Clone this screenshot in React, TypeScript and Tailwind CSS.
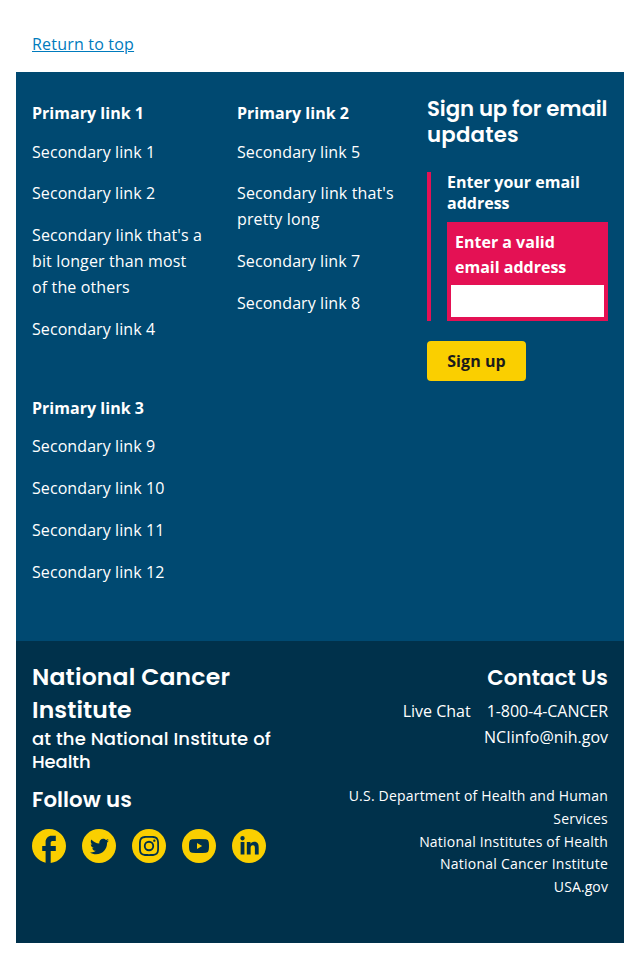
import type { ReactNode } from "react";
import { FaTwitter, FaLinkedinIn } from "react-icons/fa";

const heading = "font-['Poppins','Inter',sans-serif] font-semibold";

type Group = { title: string; links: string[] };

const groups: Group[] = [
  { title: "Primary link 1", links: ["Secondary link 1", "Secondary link 2", "Secondary link that's a bit longer than most of the others", "Secondary link 4"] },
  { title: "Primary link 2", links: ["Secondary link 5", "Secondary link that's pretty long", "Secondary link 7", "Secondary link 8"] },
  { title: "Primary link 3", links: ["Secondary link 9", "Secondary link 10", "Secondary link 11", "Secondary link 12"] },
];

function LinkGroup({ group, className, firstClassName = "" }: { group: Group; className: string; firstClassName?: string }) {
  return (
    <section className={className}>
      <h3 className="font-bold leading-[18px] tracking-[0.03px]">{group.title}</h3>
      <ul className="mt-[17px] flex flex-col gap-4 leading-[25.92px]">
        {group.links.map((link, i) => (
          <li key={link} className={i === 0 ? firstClassName : ""}>
            <a href="#" className={link.includes("that's") ? "tracking-[0.13px]" : "tracking-[0.08px]"}>{link}</a>
          </li>
        ))}
      </ul>
    </section>
  );
}

function Social({ label, children }: { label: string; children: ReactNode }) {
  return (
    <a href="#" aria-label={label} className="flex size-[34px] items-center justify-center rounded-full bg-[#facf00] text-[#00314b]">
      {children}
    </a>
  );
}

export default function App() {
  return (
    <div className="h-[959px] bg-white px-4 font-['Open_Sans',sans-serif] text-base text-white">
      <nav className="h-[72px] px-4 pt-[31px] leading-[26px]">
        <a href="#" className="tracking-[0.2px] text-[#007bbd] underline">Return to top</a>
      </nav>
      <footer>
        <div className="flex h-[569px] bg-[#004971] px-4">
          <div className="flex w-[395px] flex-wrap content-start pt-8">
            <LinkGroup group={groups[0]} className="h-[295px] w-[205px] pr-[34px]" firstClassName="mt-px -mb-px" />
            <LinkGroup group={groups[1]} className="h-[295px] w-[190px] pr-[30px]" firstClassName="mt-px -mb-px" />
            <LinkGroup group={groups[2]} className="w-[205px]" />
          </div>
          <form className="w-[181px] pt-6">
            <h3 className={`${heading} text-[21.3px] leading-[26px]`}>
              <span className="block whitespace-nowrap tracking-[-0.12px]">Sign up for email</span>
              <span className="block tracking-[0.2px]">updates</span>
            </h3>
            <div className="mt-6 h-[149px] border-l-4 border-[#e41154] pl-4">
              <label htmlFor="email" className="block h-[50px] font-bold leading-[20.8px]">Enter your email address</label>
              <div className="h-[99px] bg-[#e41154] px-1 pt-2">
                <p className="h-[55px] px-1 font-bold leading-[25px]">Enter a valid email address</p>
                <input id="email" type="email" className="block h-8 w-full bg-white px-2 text-black outline-none" />
              </div>
            </div>
            <button type="button" className="mt-5 h-10 w-[99px] rounded-[4px] bg-[#facf00] font-bold leading-4 tracking-[0.08px] text-[#1b1b1b]">Sign up</button>
          </form>
        </div>
        <div className="flex h-[302px] justify-between bg-[#00314b] px-4">
          <div className="w-[272px] pt-[19px]">
            <p className={`${heading} text-[23.5px] leading-[33px]`}>
              <span className="block tracking-[0.2px]">National Cancer</span>
              <span className="block tracking-[0.1px]">Institute</span>
            </p>
            <p className="mt-px font-['Poppins','Inter',sans-serif] text-[18px] font-medium leading-[23px]">
              <span className="block whitespace-nowrap tracking-[0.14px]">at the National Institute of</span>
              <span className="block tracking-[-0.1px]">Health</span>
            </p>
            <h3 className={`${heading} mt-[13px] text-[21.3px] leading-[28px] tracking-[0.1px]`}>Follow us</h3>
            <div className="mt-[15px] flex gap-4">
              <a href="#" aria-label="Facebook" className="size-[34px] text-[#facf00]">
                <svg viewBox="2 2 20 20" className="size-[34px] fill-current">
                  <path d="M22 12c0-5.52-4.48-10-10-10S2 6.48 2 12c0 4.84 3.44 8.87 8 9.8V15H8v-3h2V9.5C10 7.57 11.57 6 13.5 6H16v3h-2c-.55 0-1 .45-1 1v2h3v3h-3v6.95c5.05-.5 9-4.76 9-9.95z" />
                </svg>
              </a>
              <Social label="Twitter"><FaTwitter size={19} /></Social>
              <Social label="Instagram">
                <svg viewBox="0 0 24 24" className="size-5 fill-current">
                  <path d="M12 2.2c3.2 0 3.6 0 4.9.1 3.2.1 4.8 1.7 4.9 4.9.1 1.3.1 1.6.1 4.8s0 3.6-.1 4.8c-.1 3.2-1.7 4.8-4.9 4.9-1.3.1-1.6.1-4.9.1s-3.6 0-4.8-.1c-3.3-.1-4.8-1.7-4.9-4.9-.1-1.3-.1-1.6-.1-4.8s0-3.6.1-4.8c.1-3.2 1.7-4.8 4.9-4.9 1.2-.1 1.6-.1 4.8-.1ZM12 0C8.7 0 8.3 0 7.1.1 2.7.3.3 2.7.1 7.1 0 8.3 0 8.7 0 12s0 3.7.1 4.9c.2 4.4 2.6 6.8 7 7 1.2.1 1.6.1 4.9.1s3.7 0 4.9-.1c4.4-.2 6.8-2.6 7-7 .1-1.2.1-1.6.1-4.9s0-3.7-.1-4.9c-.2-4.4-2.6-6.8-7-7C15.7 0 15.3 0 12 0Zm0 5.8a6.2 6.2 0 1 0 0 12.4 6.2 6.2 0 0 0 0-12.4ZM12 16a4 4 0 1 1 0-8 4 4 0 0 1 0 8Zm6.4-11.8a1.4 1.4 0 1 0 0 2.8 1.4 1.4 0 0 0 0-2.8Z" />
                </svg>
              </Social>
              <Social label="YouTube">
                <svg viewBox="0 0 20 14" className="h-[14px] w-5">
                  <path className="fill-current" d="M3 .3Q10-.3 17 .3Q19.4.4 19.7 3Q20.3 7 19.7 11Q19.4 13.6 17 13.7Q10 14.3 3 13.7Q.6 13.6.3 11Q-.3 7 .3 3Q.6.4 3 .3Z" />
                  <path className="fill-[#facf00]" d="M8 4v6l5.2-3Z" />
                </svg>
              </Social>
              <Social label="LinkedIn"><FaLinkedinIn size={21} /></Social>
            </div>
          </div>
          <div className="w-[272px] pt-[23px] text-right">
            <h3 className={`${heading} text-[21.3px] leading-[28px] tracking-[0.15px]`}>Contact Us</h3>
            <address className="mt-[6px] not-italic leading-[26px]">
              <div className="flex justify-end gap-4"><a href="#">Live Chat</a><a href="#" className="tracking-[-0.07px]">1-800-4-CANCER</a></div>
              <a href="#">NCIinfo@nih.gov</a>
            </address>
            <ul className="mt-[35px] text-sm leading-[22.68px] tracking-[0.2px]">
              <li>U.S. Department of Health and Human Services</li>
              <li className="mt-px -mb-px">National Institutes of Health</li>
              <li className="tracking-[0.24px]">National Cancer Institute</li>
              <li className="tracking-[0.1px]">USA.gov</li>
            </ul>
          </div>
        </div>
      </footer>
    </div>
  );
}
